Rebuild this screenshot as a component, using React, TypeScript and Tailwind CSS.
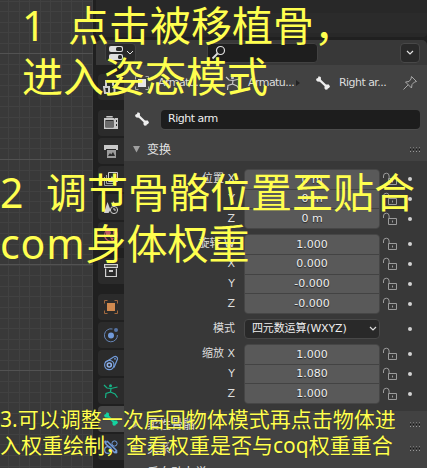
import React from 'react';

const UI_FONT = "font-['DejaVu_Sans','Noto_Sans_CJK_SC',sans-serif]";

function Svg({ children, className = '' }: { children: React.ReactNode; className?: string }) {
  return (
    <svg viewBox="0 0 16 16" width="16" height="16" fill="none" className={`shrink-0 ${className}`}>
      {children}
    </svg>
  );
}

function BoneIcon({ color = '#eeeeee' }: { color?: string }) {
  return (
    <Svg>
      <path d="M3.6 1.2 5.8 2 6 4.8 11 9.4 13.8 9.6 15 11.4 14 13 12.8 13.4 12.4 14.6 10.6 14.8 9.4 13.2 9.6 11.2 4.8 6.8 2.4 6.6 1 5 1.6 3.4 3 3Z" fill={color} />
    </Svg>
  );
}

function LockIcon() {
  return (
    <svg viewBox="0 0 16 14" width="16" height="14" fill="none" stroke="#9b9b9b" className="shrink-0">
      <path d="M1.5 6V4a2.8 2.8 0 0 1 5.6 0v3M6.5 6.5h8v6h-8z" />
      <path d="M10.5 8.5v2" />
    </svg>
  );
}

function ArmatureIcon({ color }: { color: string }) {
  return (
    <Svg>
      <circle cx="7.5" cy="2.8" r="1.5" fill={color} />
      <path d="M1 2 4 5 8 5.5 14.5 4M8 5.5 7.5 9 3 10.5 2.5 15M7.5 9 12 11 14.5 14.5" stroke={color} strokeWidth="1.2" />
    </Svg>
  );
}

const tabIcons: Record<string, React.ReactNode> = {
  tool: (
    <Svg>
      <path d="M3 1v6M1 8h5v6H2zM10 1v5l1.500 2v7M14.500 1v4l-3 3" stroke="#cfcfcf" strokeWidth="2" />
    </Svg>
  ),
  render: (
    <Svg>
      <path d="M4 2.500V1.700h5v.8M1.700 4.200h9.600v9H1.700z" stroke="#c8c8c8" strokeWidth="1.4" />
      <path d="M1 3h10v2H1zM12 3h3v11h-3z" fill="#c8c8c8" />
      <path d="M3 7h7M3 9h7M3 11h7" stroke="#aaa" />
      <path d="M13 5h1v2h-1zM13 9h1v2h-1z" fill="#2a2a2a" />
    </Svg>
  ),
  output: (
    <Svg>
      <path d="M1 2h14v5h-2V6H3v1H1z" fill="#c8c8c8" />
      <path d="M4 7h9v8H4z" fill="#9c9c9c" />
      <path d="m5 13 2-3 1.200 1.500L10 9l2 4z" fill="#2b2b2b" />
    </Svg>
  ),
  layers: (
    <Svg>
      <path d="M1.500 6v8.500H10M3.500 4v8.500H12" stroke="#a4a4a4" />
      <path d="M5.500 1.500h9v9h-9z" stroke="#cfcfcf" />
      <path d="m6 10 3-5 2 3 1-1 2 3z" fill="#cfcfcf" />
    </Svg>
  ),
  scene: (
    <Svg>
      <path d="m4.500 3 3 8-2 3H1zM10 2l3.500 5H9z" fill="#cfcfcf" />
      <circle cx="11" cy="11" r="3.6" stroke="#cfcfcf" />
      <path d="M11 9v2h2" stroke="#cfcfcf" />
    </Svg>
  ),
  world: (
    <Svg>
      <circle cx="8" cy="8" r="6.4" stroke="#bd5964" strokeWidth="1.2" />
      <path d="m3 4 4-1 1 3-2 3-3-1zM10 3l4 3-2 3-2-2zM7 10l4 1-2 3z" fill="#bd5964" />
    </Svg>
  ),
  collection: (
    <Svg>
      <path d="M1.600 1.600h12.800v2.800H1.600zM2.600 5.500v8h10.800v-8" stroke="#d0d0d0" strokeWidth="1.2" />
      <path d="M6 7h4v2H6z" fill="#d0d0d0" />
    </Svg>
  ),
  object: (
    <Svg>
      <path d="M4 4h8v8H4z" fill="#d0894f" />
      <path d="M1.500 4.500v-3h3M11.500 1.500h3v3M14.500 11.500v3h-3M4.500 14.500h-3v-3" stroke="#a0683e" />
    </Svg>
  ),
  physics: (
    <Svg>
      <circle cx="8" cy="8.5" r="3" fill="#729bda" />
      <circle cx="13" cy="3" r="2" fill="#5674a5" />
      <path d="M9.500 2A6.500 6.500 0 1 0 14.400 8" stroke="#6584b5" />
    </Svg>
  ),
  constraint: (
    <Svg>
      <path d="M2 7.500 11 1.800C13 .8 15 2.400 14.500 4L11 12.500" stroke="#729bda" strokeWidth="1.2" />
      <circle cx="6.3" cy="10" r="4.7" stroke="#729bda" strokeWidth="1.2" />
      <circle cx="6.3" cy="10" r="2" stroke="#8fb1e8" strokeWidth="1.6" />
      <circle cx="12" cy="3.8" r=".9" fill="#729bda" />
    </Svg>
  ),
  data: <ArmatureIcon color="#16b386" />,
  bone: <BoneIcon color="#14d3a0" />,
  boneConstraint: (
    <Svg>
      <path d="m2 4 10 10M4 2l10 10" stroke="#729bda" strokeWidth="1.5" />
      <circle cx="5" cy="11" r="3.4" stroke="#729bda" strokeWidth="1.2" />
      <circle cx="11.5" cy="4.5" r="2.6" stroke="#729bda" />
      <circle cx="13" cy="13" r="1.5" fill="#729bda" />
      <circle cx="2.5" cy="3" r="1.4" fill="#729bda" />
    </Svg>
  ),
};

function Tab({ name, active = false }: { name: string; active?: boolean }) {
  return (
    <div className={`flex h-[26px] w-[26px] shrink-0 items-center justify-center rounded-l ${active ? 'bg-[#484848]' : 'bg-[#2b2b2b]'}`}>
      {tabIcons[name]}
    </div>
  );
}

function Grip() {
  return (
    <div className="grid grid-cols-[repeat(4,1px)] gap-x-[2px] gap-y-px">
      {Array.from({ length: 12 }, (_, i) => (
        <span key={i} className={`h-px w-px ${i < 4 ? 'bg-[#777777]' : i < 8 ? 'bg-[#161616]' : 'bg-[#999999]'}`} />
      ))}
    </div>
  );
}

function SectionHeader({ title, open = false }: { title: string; open?: boolean }) {
  return (
    <div className="flex h-[23px] shrink-0 items-center pr-[7px] pl-[9px]">
      <svg viewBox="0 0 7 7" width="7" height="7" className={open ? '' : '-rotate-90'}>
        <path d="M0 0h7L3.500 6.500z" fill="#a0a0a0" />
      </svg>
      <span className="ml-[7px] grow text-[12px] text-[#e2e2e2]">{title}</span>
      <Grip />
    </div>
  );
}

function Group({ rows }: { rows: [string, string][] }) {
  return (
    <div className="flex">
      <div className="w-[111px]">
        {rows.map(([label], i) => (
          <div key={i} className="flex h-5 items-center justify-end text-[11px] text-[#dddddd]">{label}</div>
        ))}
      </div>
      <div className="ml-[9px] flex w-[136px] flex-col gap-px overflow-hidden rounded-[4px] border border-[#464646] bg-[#434343]">
        {rows.map(([, value], i) => (
          <div key={i} className="flex grow basis-0 items-center justify-center bg-[#595959] pt-px text-[11px] text-[#eeeeee] [text-shadow:0_1px_1px_#222]">
            {value}
          </div>
        ))}
      </div>
      <div className="ml-[2px] w-[40px]">
        {rows.map((_, i) => (
          <div key={i} className="flex h-5 items-center">
            <LockIcon />
            <span className="ml-[10px] h-1 w-1 rounded-full bg-[#d2d2d2]" />
          </div>
        ))}
      </div>
    </div>
  );
}

function Viewport() {
  const major = [53, 159, 264, 370];
  return (
    <svg width="93" height="468" className="shrink-0 bg-[#393939]" shapeRendering="crispEdges">
      {Array.from({ length: 9 }, (_, i) => (
        <rect key={i} x={Math.round(8.3 + i * 10.5)} y="0" width="1" height="468" fill="#414141" />
      ))}
      {Array.from({ length: 45 }, (_, i) => (
        <rect key={i} x="0" y={Math.round(0.5 + i * 10.57)} width="93" height="1" fill="#414141" />
      ))}
      {major.map((y) => (
        <rect key={y} x="0" y={y} width="93" height="1" fill="#525252" />
      ))}
    </svg>
  );
}

function Note({ className, children }: { className: string; children: React.ReactNode }) {
  return (
    <div className={`absolute whitespace-pre font-['Noto_Sans','Noto_Sans_CJK_SC',sans-serif] text-[#ffff4f] ${className}`}>
      {children}
    </div>
  );
}

export default function App() {
  return (
    <div className={`relative flex h-[468px] w-[427px] overflow-hidden bg-[#202020] ${UI_FONT}`}>
      <Viewport />
      <div className="flex w-[334px] flex-col pl-[3px]">
        <div className="h-[37px] shrink-0 rounded-b-[4px] bg-[linear-gradient(#282828_0_13px,#2b2b2b_13px_33px,#282828_33px)]" />
        <div className="mt-[3px] flex h-[25px] shrink-0 items-center rounded-t-[5px] bg-[#383838] pr-[7px] pl-[9px]">
          <div className="flex h-5 w-[31px] items-center rounded border border-[#424242] bg-[#292929] pl-[3px]">
            <svg viewBox="0 0 15 16" width="15" height="16">
              <rect x="0" y="1" width="14" height="6" rx="2" fill="#dedede" />
              <rect x="7" y="2" width="6" height="4" rx="1.5" fill="#292929" />
              <rect x="0" y="9" width="14" height="6" rx="2" fill="#dedede" />
              <rect x="9" y="10" width="4" height="4" rx="1.5" fill="#292929" />
            </svg>
            <svg viewBox="0 0 8 6" width="8" height="6" fill="none" stroke="#ddd" className="ml-[2px]"><path d="m1 1 3 3 3-3" /></svg>
          </div>
          <div className="ml-[71px] flex h-5 w-[111px] items-center rounded border border-[#424242] bg-[#1e1e1e] pl-[3px]">
            <svg viewBox="0 0 15 15" width="15" height="15" fill="none" stroke="#e0e0e0" strokeWidth="1.2"><circle cx="9.500" cy="5.500" r="4" /><path d="M6.500 8.500 1.500 13.500" strokeWidth="1.8" /></svg>
          </div>
          <div className="ml-auto flex h-5 w-5 items-center justify-center rounded border border-[#484848] bg-[#292929]">
            <svg viewBox="0 0 8 6" width="8" height="6" fill="none" stroke="#e2e2e2" strokeWidth="1.2"><path d="m1 1 3 3 3-3" /></svg>
          </div>
        </div>
        <div className="flex min-h-0 grow">
          <div className="flex w-[28px] flex-col gap-[2px] bg-[#202020] pt-[9px] pl-[2px]">
            <Tab name="tool" />
            <div className="h-[6px] shrink-0" />
            <Tab name="render" />
            <Tab name="output" />
            <Tab name="layers" />
            <Tab name="scene" />
            <Tab name="world" />
            <div className="h-[6px] shrink-0" />
            <Tab name="collection" />
            <div className="h-[6px] shrink-0" />
            <Tab name="object" />
            <Tab name="physics" />
            <Tab name="constraint" />
            <Tab name="data" />
            <Tab name="bone" active />
            <Tab name="boneConstraint" />
          </div>
          <div className="flex w-[303px] flex-col bg-[#424242]">
            <div className="flex h-[36px] shrink-0 items-center pl-[10px] text-[11px] tracking-[-0.55px] text-[#dddddd]">
              <Svg>
                <path d="M4 4h8v8H4z" fill="#e6e6e6" />
                <path d="M1.500 4.500v-3h3M11.500 1.500h3v3M14.500 11.500v3h-3M4.500 14.500h-3v-3" stroke="#aaa" />
              </Svg>
              <span className="ml-[8px] w-[67px]">Armatu...</span>
              <ArmatureIcon color="#c9c9c9" />
              <span className="ml-[7px] w-[48px]">Armatu...</span>
              <svg viewBox="0 0 4 6" width="4" height="6"><path d="m0 0 4 3-4 3z" fill="#222" /></svg>
              <span className="w-[15px]" />
              <BoneIcon />
              <span className="ml-[8px] w-[63px]">Right ar...</span>
              <svg viewBox="0 0 16 16" width="16" height="16" fill="none" stroke="#a7a7a7"><path d="m9.500 1.500 5 5-2 .5-2.500 2.500-.5 3.500-6-6 3.500-.5L9 4zM6.200 9.800 1.500 14.500" /></svg>
            </div>
            <div className="mt-[8px] flex h-[20px] shrink-0 items-center pl-[10px]">
              <BoneIcon />
              <div className="ml-[11px] flex h-[19px] w-[259px] items-center rounded bg-[#1d1d1d] pt-px pl-[7px] text-[11px] tracking-[-0.5px] text-[#eeeeee] shadow-[0_1px_0_#4c4c4c]">Right arm</div>
            </div>
            <div className="h-[9px] shrink-0" />
            <SectionHeader title="变换" open />
            <div className="flex h-[250px] shrink-0 flex-col gap-[5px] bg-[#383838] pt-2">
              <Group rows={[['位置 X', '0 m'], ['Y', '0 m'], ['Z', '0 m']]} />
              <Group rows={[['旋转 W', '1.000'], ['X', '0.000'], ['Y', '-0.000'], ['Z', '-0.000']]} />
              <div className="flex h-5 items-center text-[11px] text-[#dddddd]">
                <span className="w-[111px] text-right">模式</span>
                <div className="ml-[9px] flex h-5 w-[136px] items-center justify-between rounded border border-[#484848] bg-[#292929] pr-[2px] pl-[7px] text-[#eeeeee]">
                  <span className="tracking-[-0.15px]">四元数运算(WXYZ)</span>
                  <svg viewBox="0 0 8 6" width="8" height="6" fill="none" stroke="#ddd" strokeWidth="1.2"><path d="m1 1 3 3 3-3" /></svg>
                </div>
                <span className="ml-[28px] h-1 w-1 rounded-full bg-[#d2d2d2]" />
              </div>
              <Group rows={[['缩放 X', '1.000'], ['Y', '1.080'], ['Z', '1.000']]} />
            </div>
            <div className="flex shrink-0 flex-col gap-px pt-[2px]">
              <SectionHeader title="柔性骨骼" />
              <SectionHeader title="关系" />
              <SectionHeader title="反向动力学" />
            </div>
          </div>
        </div>
      </div>

      <Note className="top-[-5px] left-[22px] text-[41px] leading-[60px]">1</Note>
      <Note className="top-[-5px] left-[68px] text-[41px] leading-[60px]">点击被移植骨，</Note>
      <Note className="top-[46px] left-[22px] text-[41px] leading-[60px]">进入姿态模式</Note>
      <Note className="top-[162px] left-0 text-[41px] leading-[60px]">2</Note>
      <Note className="top-[162px] left-[46px] text-[41px] leading-[60px]">调节骨骼位置至贴合</Note>
      <Note className="top-[213px] left-0 text-[41px] leading-[60px]">
        <span className="tracking-[0.9px]">com</span>身体权重
      </Note>
      <Note className="top-[404px] left-0 text-[21px] leading-[30px] [text-shadow:0_0_1px_#222]">3.可以调整一次后回物体模式再点击物体进</Note>
      <Note className="top-[430px] left-0 text-[21px] leading-[30px] [text-shadow:0_0_1px_#222]">入权重绘制，查看权重是否与coq权重重合</Note>
    </div>
  );
}
